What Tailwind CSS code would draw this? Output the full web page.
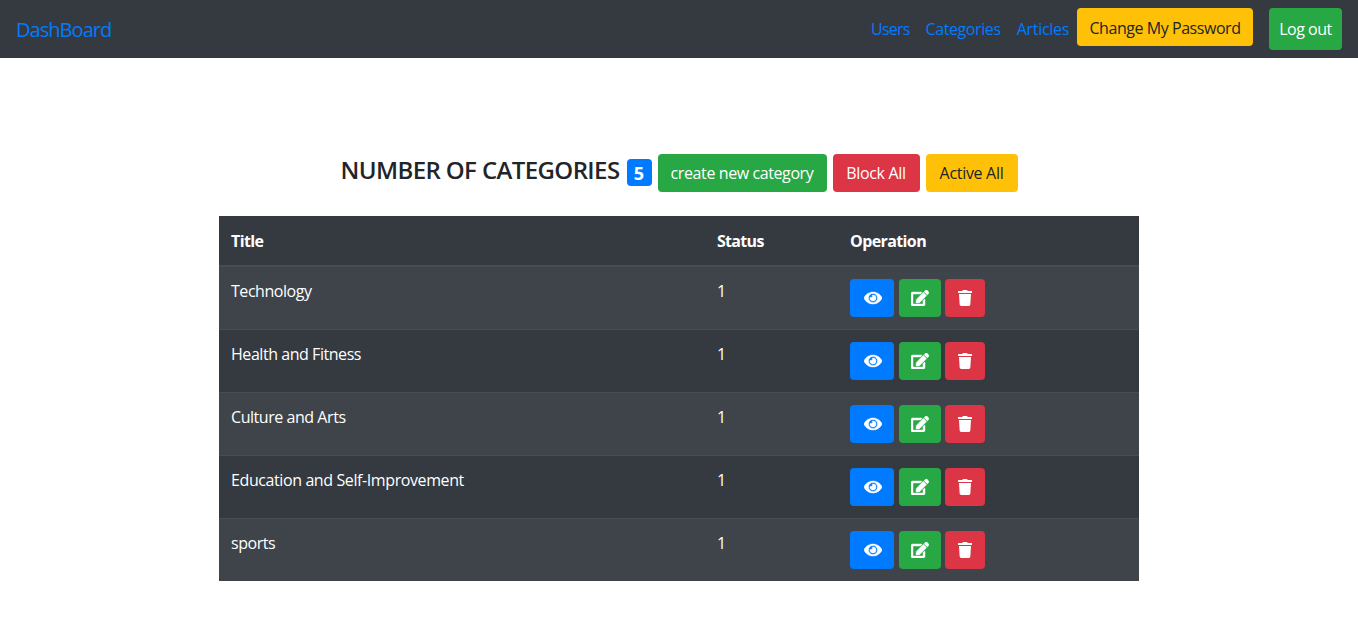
<!DOCTYPE html>
<html lang="en">
<head>
  <meta charset="UTF-8" />
  <title>Categories</title>
  <script src="https://cdn.jsdelivr.net/npm/@tailwindcss/browser@4"></script>
</head>
<body class="bg-white font-['Open_Sans',sans-serif] text-[16px] leading-6 text-[#212529]">

  <nav class="flex h-[58px] items-start justify-between bg-[#343a40] pl-4 pr-4">
    <a href="#" class="mt-[15px] text-[20px] leading-[30px] tracking-[-0.95px] text-[#007bff]">DashBoard</a>
    <div class="flex items-start">
      <a href="#" class="mt-[17px] tracking-[-0.8px] text-[#007bff]">Users</a>
      <a href="#" class="ml-4 mt-[17px] tracking-[-0.4px] text-[#007bff]">Categories</a>
      <a href="#" class="ml-4 mt-[17px] tracking-[-0.3px] text-[#007bff]">Articles</a>
      <button class="ml-2 mt-2 h-[38px] w-[176px] rounded pt-px bg-[#ffc107] tracking-[-0.45px] text-[#212529]">Change My Password</button>
      <button class="ml-4 mt-2 h-[42px] w-[73px] rounded bg-[#28a745] tracking-[-0.5px] text-white">Log out</button>
    </div>
  </nav>

  <main class="mx-auto w-[920px] pt-[96px]">
    <div class="flex items-start justify-center">
      <h3 class="text-[24px] leading-[32px] font-semibold tracking-[-0.6px]">NUMBER OF CATEGORIES</h3>
      <span class="ml-[7px] mt-[5px] flex h-[27px] w-[25px] items-center justify-center rounded bg-[#007bff] text-[18px] font-bold text-white">5</span>
      <button class="ml-[6px] h-[38px] w-[169px] rounded bg-[#28a745] tracking-[-0.4px] text-white">create new category</button>
      <button class="ml-[6px] h-[38px] w-[87px] rounded bg-[#dc3545] tracking-[-0.3px] text-white">Block All</button>
      <button class="ml-[6px] h-[38px] w-[92px] rounded bg-[#ffc107] tracking-[-0.3px] text-[#212529]">Active All</button>
    </div>

    <table class="mt-6 w-[920px] table-fixed border-collapse bg-[#343a40] text-left text-white">
      <thead>
        <tr class="h-[50px] border-b-2 border-[#454d55]">
          <th class="w-[486px] px-3 font-bold tracking-[-0.6px]">Title</th>
          <th class="w-[133px] px-3 font-bold tracking-[-0.7px]">Status</th>
          <th class="px-3 font-bold tracking-[-0.6px]">Operation</th>
        </tr>
      </thead>
      <tbody>
        <tr class="h-[63px] border-t border-[#454d55] bg-[#3e444a]">
          <td class="px-3 pt-3 align-top tracking-[-0.45px]">Technology</td>
          <td class="px-3 pt-3 align-top">1</td>
          <td class="px-3 py-3 align-top">
            <div class="flex">
              <button class="flex h-[38px] w-[44px] items-center justify-center rounded bg-[#007bff] pl-px"><svg class="h-4 w-[18px] fill-white stroke-white stroke-[14]" viewBox="0 0 576 512"><path d="M572.52 241.4C518.29 135.59 410.93 64 288 64S57.68 135.64 3.48 241.41a32.35 32.35 0 0 0 0 29.19C57.71 376.41 165.07 448 288 448s230.32-71.64 284.52-177.41a32.35 32.35 0 0 0 0-29.19zM288 400a144 144 0 1 1 144-144 143.93 143.93 0 0 1-144 144zm0-240a95.31 95.31 0 0 0-25.31 3.79 47.85 47.85 0 0 1-66.9 66.9A95.78 95.78 0 1 0 288 160z"/></svg></button>
              <button class="ml-[5px] flex h-[38px] w-[42px] items-center justify-center rounded bg-[#28a745]"><svg class="h-4 w-[18px] fill-white stroke-white stroke-[14]" viewBox="0 0 576 512"><path d="M402.6 83.2l90.2 90.2c3.8 3.8 3.8 10 0 13.8L274.4 405.6l-92.8 10.3c-12.4 1.4-22.9-9.1-21.5-21.5l10.3-92.8L388.8 83.2c3.8-3.8 10-3.8 13.8 0zm162-22.9l-48.8-48.8c-15.2-15.2-39.9-15.2-55.2 0l-35.4 35.4c-3.8 3.8-3.8 10 0 13.8l90.2 90.2c3.8 3.8 10 3.8 13.8 0l35.4-35.4c15.2-15.3 15.2-40 0-55.2zM384 346.2V448H64V128h229.8c3.2 0 6.2-1.3 8.5-3.5l40-40c7.6-7.6 2.2-20.5-8.5-20.5H48C21.5 64 0 85.5 0 112v352c0 26.5 21.5 48 48 48h352c26.5 0 48-21.5 48-48V306.2c0-10.7-12.9-16-20.5-8.5l-40 40c-2.2 2.3-3.5 5.3-3.5 8.5z"/></svg></button>
              <button class="ml-1 flex h-[38px] w-[40px] items-center justify-center rounded bg-[#dc3545]"><svg class="h-4 w-[14px] fill-white" viewBox="0 0 448 512"><path d="M432 32H312l-9.4-18.7A24 24 0 0 0 281.1 0H166.8a23.72 23.72 0 0 0-21.4 13.3L136 32H16A16 16 0 0 0 0 48v32a16 16 0 0 0 16 16h416a16 16 0 0 0 16-16V48a16 16 0 0 0-16-16zM53.2 467a48 48 0 0 0 47.9 45h245.8a48 48 0 0 0 47.9-45L416 128H32z"/></svg></button>
            </div>
          </td>
        </tr>
        <tr class="h-[63px] border-t border-[#454d55]">
          <td class="px-3 pt-3 align-top tracking-[-0.45px]">Health and Fitness</td>
          <td class="px-3 pt-3 align-top">1</td>
          <td class="px-3 py-3 align-top">
            <div class="flex">
              <button class="flex h-[38px] w-[44px] items-center justify-center rounded bg-[#007bff] pl-px"><svg class="h-4 w-[18px] fill-white stroke-white stroke-[14]" viewBox="0 0 576 512"><path d="M572.52 241.4C518.29 135.59 410.93 64 288 64S57.68 135.64 3.48 241.41a32.35 32.35 0 0 0 0 29.19C57.71 376.41 165.07 448 288 448s230.32-71.64 284.52-177.41a32.35 32.35 0 0 0 0-29.19zM288 400a144 144 0 1 1 144-144 143.93 143.93 0 0 1-144 144zm0-240a95.31 95.31 0 0 0-25.31 3.79 47.85 47.85 0 0 1-66.9 66.9A95.78 95.78 0 1 0 288 160z"/></svg></button>
              <button class="ml-[5px] flex h-[38px] w-[42px] items-center justify-center rounded bg-[#28a745]"><svg class="h-4 w-[18px] fill-white stroke-white stroke-[14]" viewBox="0 0 576 512"><path d="M402.6 83.2l90.2 90.2c3.8 3.8 3.8 10 0 13.8L274.4 405.6l-92.8 10.3c-12.4 1.4-22.9-9.1-21.5-21.5l10.3-92.8L388.8 83.2c3.8-3.8 10-3.8 13.8 0zm162-22.9l-48.8-48.8c-15.2-15.2-39.9-15.2-55.2 0l-35.4 35.4c-3.8 3.8-3.8 10 0 13.8l90.2 90.2c3.8 3.8 10 3.8 13.8 0l35.4-35.4c15.2-15.3 15.2-40 0-55.2zM384 346.2V448H64V128h229.8c3.2 0 6.2-1.3 8.5-3.5l40-40c7.6-7.6 2.2-20.5-8.5-20.5H48C21.5 64 0 85.5 0 112v352c0 26.5 21.5 48 48 48h352c26.5 0 48-21.5 48-48V306.2c0-10.7-12.9-16-20.5-8.5l-40 40c-2.2 2.3-3.5 5.3-3.5 8.5z"/></svg></button>
              <button class="ml-1 flex h-[38px] w-[40px] items-center justify-center rounded bg-[#dc3545]"><svg class="h-4 w-[14px] fill-white" viewBox="0 0 448 512"><path d="M432 32H312l-9.4-18.7A24 24 0 0 0 281.1 0H166.8a23.72 23.72 0 0 0-21.4 13.3L136 32H16A16 16 0 0 0 0 48v32a16 16 0 0 0 16 16h416a16 16 0 0 0 16-16V48a16 16 0 0 0-16-16zM53.2 467a48 48 0 0 0 47.9 45h245.8a48 48 0 0 0 47.9-45L416 128H32z"/></svg></button>
            </div>
          </td>
        </tr>
        <tr class="h-[63px] border-t border-[#454d55] bg-[#3e444a]">
          <td class="px-3 pt-3 align-top tracking-[-0.45px]">Culture and Arts</td>
          <td class="px-3 pt-3 align-top">1</td>
          <td class="px-3 py-3 align-top">
            <div class="flex">
              <button class="flex h-[38px] w-[44px] items-center justify-center rounded bg-[#007bff] pl-px"><svg class="h-4 w-[18px] fill-white stroke-white stroke-[14]" viewBox="0 0 576 512"><path d="M572.52 241.4C518.29 135.59 410.93 64 288 64S57.68 135.64 3.48 241.41a32.35 32.35 0 0 0 0 29.19C57.71 376.41 165.07 448 288 448s230.32-71.64 284.52-177.41a32.35 32.35 0 0 0 0-29.19zM288 400a144 144 0 1 1 144-144 143.93 143.93 0 0 1-144 144zm0-240a95.31 95.31 0 0 0-25.31 3.79 47.85 47.85 0 0 1-66.9 66.9A95.78 95.78 0 1 0 288 160z"/></svg></button>
              <button class="ml-[5px] flex h-[38px] w-[42px] items-center justify-center rounded bg-[#28a745]"><svg class="h-4 w-[18px] fill-white stroke-white stroke-[14]" viewBox="0 0 576 512"><path d="M402.6 83.2l90.2 90.2c3.8 3.8 3.8 10 0 13.8L274.4 405.6l-92.8 10.3c-12.4 1.4-22.9-9.1-21.5-21.5l10.3-92.8L388.8 83.2c3.8-3.8 10-3.8 13.8 0zm162-22.9l-48.8-48.8c-15.2-15.2-39.9-15.2-55.2 0l-35.4 35.4c-3.8 3.8-3.8 10 0 13.8l90.2 90.2c3.8 3.8 10 3.8 13.8 0l35.4-35.4c15.2-15.3 15.2-40 0-55.2zM384 346.2V448H64V128h229.8c3.2 0 6.2-1.3 8.5-3.5l40-40c7.6-7.6 2.2-20.5-8.5-20.5H48C21.5 64 0 85.5 0 112v352c0 26.5 21.5 48 48 48h352c26.5 0 48-21.5 48-48V306.2c0-10.7-12.9-16-20.5-8.5l-40 40c-2.2 2.3-3.5 5.3-3.5 8.5z"/></svg></button>
              <button class="ml-1 flex h-[38px] w-[40px] items-center justify-center rounded bg-[#dc3545]"><svg class="h-4 w-[14px] fill-white" viewBox="0 0 448 512"><path d="M432 32H312l-9.4-18.7A24 24 0 0 0 281.1 0H166.8a23.72 23.72 0 0 0-21.4 13.3L136 32H16A16 16 0 0 0 0 48v32a16 16 0 0 0 16 16h416a16 16 0 0 0 16-16V48a16 16 0 0 0-16-16zM53.2 467a48 48 0 0 0 47.9 45h245.8a48 48 0 0 0 47.9-45L416 128H32z"/></svg></button>
            </div>
          </td>
        </tr>
        <tr class="h-[63px] border-t border-[#454d55]">
          <td class="px-3 pt-3 align-top tracking-[-0.4px]">Education and Self-Improvement</td>
          <td class="px-3 pt-3 align-top">1</td>
          <td class="px-3 py-3 align-top">
            <div class="flex">
              <button class="flex h-[38px] w-[44px] items-center justify-center rounded bg-[#007bff] pl-px"><svg class="h-4 w-[18px] fill-white stroke-white stroke-[14]" viewBox="0 0 576 512"><path d="M572.52 241.4C518.29 135.59 410.93 64 288 64S57.68 135.64 3.48 241.41a32.35 32.35 0 0 0 0 29.19C57.71 376.41 165.07 448 288 448s230.32-71.64 284.52-177.41a32.35 32.35 0 0 0 0-29.19zM288 400a144 144 0 1 1 144-144 143.93 143.93 0 0 1-144 144zm0-240a95.31 95.31 0 0 0-25.31 3.79 47.85 47.85 0 0 1-66.9 66.9A95.78 95.78 0 1 0 288 160z"/></svg></button>
              <button class="ml-[5px] flex h-[38px] w-[42px] items-center justify-center rounded bg-[#28a745]"><svg class="h-4 w-[18px] fill-white stroke-white stroke-[14]" viewBox="0 0 576 512"><path d="M402.6 83.2l90.2 90.2c3.8 3.8 3.8 10 0 13.8L274.4 405.6l-92.8 10.3c-12.4 1.4-22.9-9.1-21.5-21.5l10.3-92.8L388.8 83.2c3.8-3.8 10-3.8 13.8 0zm162-22.9l-48.8-48.8c-15.2-15.2-39.9-15.2-55.2 0l-35.4 35.4c-3.8 3.8-3.8 10 0 13.8l90.2 90.2c3.8 3.8 10 3.8 13.8 0l35.4-35.4c15.2-15.3 15.2-40 0-55.2zM384 346.2V448H64V128h229.8c3.2 0 6.2-1.3 8.5-3.5l40-40c7.6-7.6 2.2-20.5-8.5-20.5H48C21.5 64 0 85.5 0 112v352c0 26.5 21.5 48 48 48h352c26.5 0 48-21.5 48-48V306.2c0-10.7-12.9-16-20.5-8.5l-40 40c-2.2 2.3-3.5 5.3-3.5 8.5z"/></svg></button>
              <button class="ml-1 flex h-[38px] w-[40px] items-center justify-center rounded bg-[#dc3545]"><svg class="h-4 w-[14px] fill-white" viewBox="0 0 448 512"><path d="M432 32H312l-9.4-18.7A24 24 0 0 0 281.1 0H166.8a23.72 23.72 0 0 0-21.4 13.3L136 32H16A16 16 0 0 0 0 48v32a16 16 0 0 0 16 16h416a16 16 0 0 0 16-16V48a16 16 0 0 0-16-16zM53.2 467a48 48 0 0 0 47.9 45h245.8a48 48 0 0 0 47.9-45L416 128H32z"/></svg></button>
            </div>
          </td>
        </tr>
        <tr class="h-[62px] border-t border-[#454d55] bg-[#3e444a]">
          <td class="px-3 pt-3 align-top tracking-[-0.45px]">sports</td>
          <td class="px-3 pt-3 align-top">1</td>
          <td class="px-3 pt-3 pb-[11px] align-top">
            <div class="flex">
              <button class="flex h-[38px] w-[44px] items-center justify-center rounded bg-[#007bff] pl-px"><svg class="h-4 w-[18px] fill-white stroke-white stroke-[14]" viewBox="0 0 576 512"><path d="M572.52 241.4C518.29 135.59 410.93 64 288 64S57.68 135.64 3.48 241.41a32.35 32.35 0 0 0 0 29.19C57.71 376.41 165.07 448 288 448s230.32-71.64 284.52-177.41a32.35 32.35 0 0 0 0-29.19zM288 400a144 144 0 1 1 144-144 143.93 143.93 0 0 1-144 144zm0-240a95.31 95.31 0 0 0-25.31 3.79 47.85 47.85 0 0 1-66.9 66.9A95.78 95.78 0 1 0 288 160z"/></svg></button>
              <button class="ml-[5px] flex h-[38px] w-[42px] items-center justify-center rounded bg-[#28a745]"><svg class="h-4 w-[18px] fill-white stroke-white stroke-[14]" viewBox="0 0 576 512"><path d="M402.6 83.2l90.2 90.2c3.8 3.8 3.8 10 0 13.8L274.4 405.6l-92.8 10.3c-12.4 1.4-22.9-9.1-21.5-21.5l10.3-92.8L388.8 83.2c3.8-3.8 10-3.8 13.8 0zm162-22.9l-48.8-48.8c-15.2-15.2-39.9-15.2-55.2 0l-35.4 35.4c-3.8 3.8-3.8 10 0 13.8l90.2 90.2c3.8 3.8 10 3.8 13.8 0l35.4-35.4c15.2-15.3 15.2-40 0-55.2zM384 346.2V448H64V128h229.8c3.2 0 6.2-1.3 8.5-3.5l40-40c7.6-7.6 2.2-20.5-8.5-20.5H48C21.5 64 0 85.5 0 112v352c0 26.5 21.5 48 48 48h352c26.5 0 48-21.5 48-48V306.2c0-10.7-12.9-16-20.5-8.5l-40 40c-2.2 2.3-3.5 5.3-3.5 8.5z"/></svg></button>
              <button class="ml-1 flex h-[38px] w-[40px] items-center justify-center rounded bg-[#dc3545]"><svg class="h-4 w-[14px] fill-white" viewBox="0 0 448 512"><path d="M432 32H312l-9.4-18.7A24 24 0 0 0 281.1 0H166.8a23.72 23.72 0 0 0-21.4 13.3L136 32H16A16 16 0 0 0 0 48v32a16 16 0 0 0 16 16h416a16 16 0 0 0 16-16V48a16 16 0 0 0-16-16zM53.2 467a48 48 0 0 0 47.9 45h245.8a48 48 0 0 0 47.9-45L416 128H32z"/></svg></button>
            </div>
          </td>
        </tr>
      </tbody>
    </table>
  </main>

</body>
</html>
